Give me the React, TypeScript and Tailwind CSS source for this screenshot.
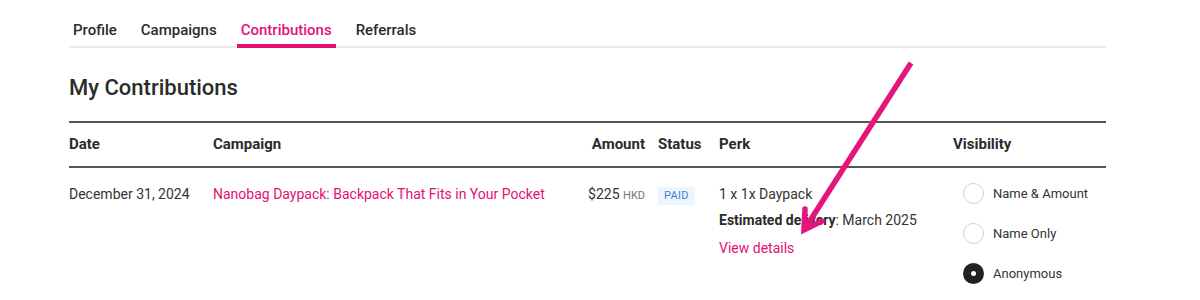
import { useState } from 'react'

const tabs = ['Profile', 'Campaigns', 'Contributions', 'Referrals']

const visibilityOptions = ['Name & Amount', 'Name Only', 'Anonymous']

export default function App() {
  const [active, setActive] = useState('Contributions')
  const [visibility, setVisibility] = useState('Anonymous')

  return (
    <div className="relative w-[1200px] h-[300px] overflow-hidden bg-white text-[#2b2b2b] font-['Roboto','Liberation_Sans',sans-serif]">
      <div className="ml-[69px] w-[1037px] pt-[19px]">
        {/* Tabs */}
        <div className="flex gap-[16px] border-b-2 border-[#ebebeb]">
          {tabs.map((t) => (
            <button
              key={t}
              onClick={() => setActive(t)}
              className={`-mb-[2px] px-[4px] pb-[3px] border-b-4 text-[15px] leading-[22px] font-medium ${
                active === t ? 'border-[#e51075] text-[#e51075]' : 'border-transparent text-[#2b2b2b]'
              }`}
            >
              {t}
            </button>
          ))}
        </div>

        <h1 className="mt-[26px] text-[22px] leading-[28px] font-medium">My Contributions</h1>

        {/* Table */}
        <div className="mt-[19px]">
          <div className="grid grid-cols-[144px_362px_70px_74px_234px_153px] border-t-2 border-b-2 border-[#555] pt-[11px] pb-[12px] text-[15px] leading-[20px] font-bold">
            <div>Date</div>
            <div>Campaign</div>
            <div className="text-right">Amount</div>
            <div className="pl-[13px]">Status</div>
            <div>Perk</div>
            <div>Visibility</div>
          </div>

          <div className="grid grid-cols-[144px_362px_70px_74px_234px_153px] pt-[16px] text-[14px] leading-[20px] text-[#333]">
            <div>December 31, 2024</div>
            <div>
              <a href="#" className="text-[#e51075]">
                Nanobag Daypack: Backpack That Fits in Your Pocket
              </a>
            </div>
            <div className="text-right whitespace-nowrap">
              $225 <span className="text-[11px] text-[#777]">HKD</span>
            </div>
            <div className="pl-[13px]">
              <span className="inline-block mt-[1px] px-[6px] py-[1px] rounded-[2px] bg-[#edf5fe] text-[11px] leading-[16px] text-[#3d7fd6] tracking-wide">
                PAID
              </span>
            </div>
            <div className="flex flex-col">
              <div>1 x 1x Daypack</div>
              <div className="mt-[6px]">
                <span className="font-bold text-[#2b2b2b]">Estimated delivery</span>: March 2025
              </div>
              <a href="#" className="mt-[8px] text-[#e51075]">
                View details
              </a>
            </div>
            <div className="flex flex-col gap-[19px] pl-[10px] -mt-[1px]">
              {visibilityOptions.map((o) => (
                <label key={o} className="flex items-center gap-[9px] text-[13px] leading-[20px] cursor-pointer" onClick={() => setVisibility(o)}>
                  {visibility === o ? (
                    <span className="flex items-center justify-center w-[21px] h-[21px] rounded-full bg-[#222]">
                      <span className="w-[5px] h-[5px] rounded-full bg-white" />
                    </span>
                  ) : (
                    <span className="w-[21px] h-[21px] rounded-full border border-[#cfcfcf] bg-white" />
                  )}
                  {o}
                </label>
              ))}
            </div>
          </div>
        </div>
      </div>

      {/* Annotation arrow */}
      <svg className="absolute left-0 top-0 pointer-events-none" width="1200" height="300" viewBox="0 0 1200 300">
        <line x1="911" y1="63" x2="806" y2="227" stroke="#e5157c" strokeWidth="5.5" />
        <polyline points="805,209 804,230 822,221" fill="none" stroke="#e5157c" strokeWidth="5.5" strokeLinejoin="miter" strokeLinecap="round" />
      </svg>
    </div>
  )
}
